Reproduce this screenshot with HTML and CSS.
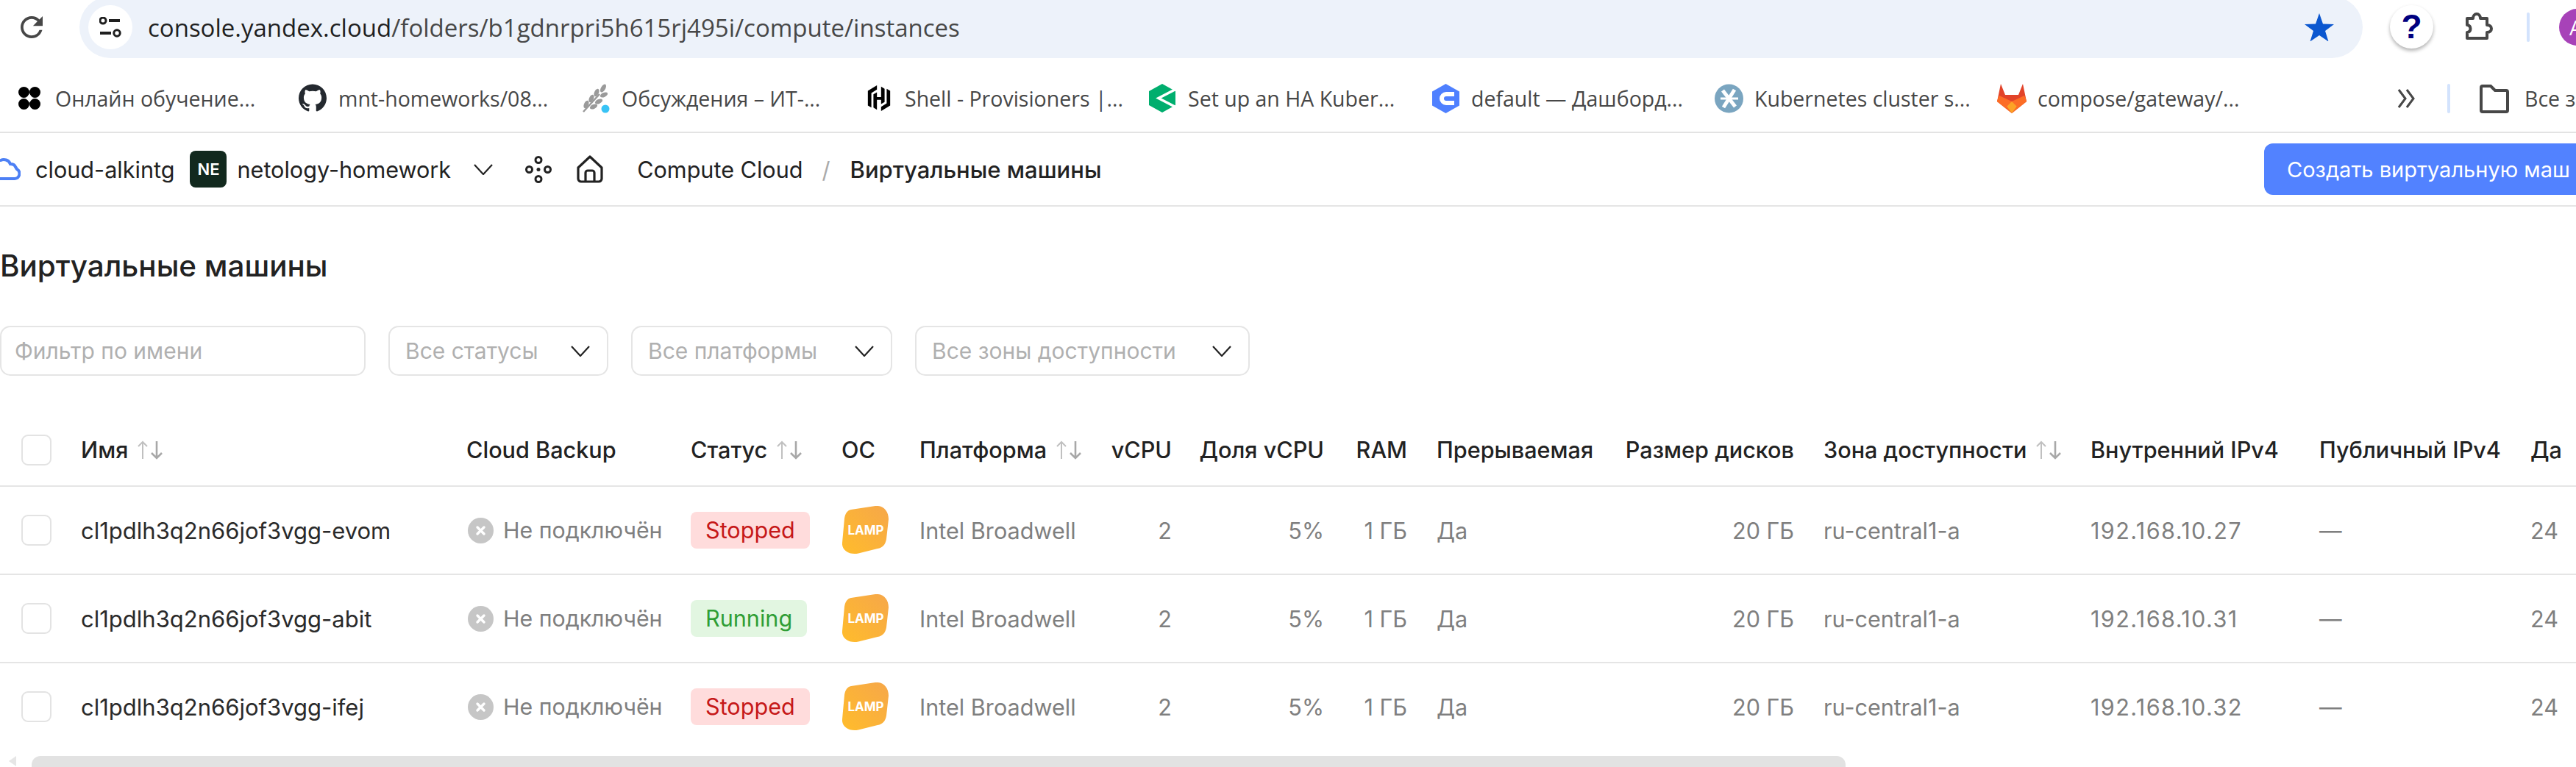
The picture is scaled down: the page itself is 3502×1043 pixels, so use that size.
FILE: index.html
```html
<!DOCTYPE html>
<html lang="ru">
<head>
<meta charset="utf-8">
<title>Виртуальные машины</title>
<link rel="stylesheet" href="styles.css">
</head>
<body>
<svg class="sprite" aria-hidden="true">
  <symbol id="sort" viewBox="0 0 36 26"><path d="M8 25V2M2 8l6-6 6 6" fill="none" stroke="#c0c0c0" stroke-width="2"/><path d="M27 1v23M20 17l7 7 7-7" fill="none" stroke="#a8a8a8" stroke-width="2.6"/></symbol>
  <symbol id="chev" viewBox="0 0 26 15"><path d="M1 1l12 13L25 1" fill="none" stroke="#222" stroke-width="2.2"/></symbol>
  <symbol id="off" viewBox="0 0 35 35"><circle cx="17.5" cy="17.5" r="17.5" fill="#c6c6c6"/><path d="M13 13l9 9M22 13l-9 9" stroke="#fff" stroke-width="3.4" stroke-linecap="round"/></symbol>
  <linearGradient id="lampfill" x1="0" y1="1" x2="1" y2="0"><stop offset="0" stop-color="#ffbc2b"/><stop offset="1" stop-color="#f6a74a"/></linearGradient>
  <symbol id="lamp" viewBox="0 0 64 66"><path d="M12 5L45 0C56-1 63 7 63 18L60 45C59 52 55 57 48 58L22 64.500C9 67-1 60 0 50L3 17C4 10 7 6 12 5Z" fill="url(#lampfill)"/></symbol>
</svg>

<header class="browser">
  <div class="toolbar">
    <svg class="reload" viewBox="4 4 16 16"><path fill="#474747" d="M17.650 6.350A7.958 7.958 0 0012 4c-4.420 0-7.990 3.580-7.990 8s3.570 8 7.990 8c3.730 0 6.840-2.550 7.730-6h-2.080A5.990 5.990 0 0112 18c-3.310 0-6-2.690-6-6s2.690-6 6-6c1.660 0 3.140.690 4.220 1.780L13 11h7V4l-2.350 2.350z"/></svg>
    <div class="omnibox">
      <span class="tune"><svg viewBox="0 0 30 28"><circle cx="5" cy="5" r="4" fill="none" stroke="#1f1f1f" stroke-width="3"/><path d="M13 5h15M1 22h15" stroke="#1f1f1f" stroke-width="4"/><circle cx="24" cy="22" r="4.200" fill="none" stroke="#1f1f1f" stroke-width="3"/></svg></span>
      <span class="url"><span class="host">console.yandex.cloud</span>/folders/b1gdnrpri5h615rj495i/compute/instances</span>
      <svg class="star" viewBox="0 0 40 38"><path fill="#0b57d0" d="M20 0l5 14.500 15 .5-12 9 4.500 14.500L20 30 7.500 38.500 12 24 0 15l15-.5z"/></svg>
    </div>
    <span class="help">?</span>
    <svg class="puzzle" viewBox="0 0 42 40"><path d="M3 10h8c0-8 10-8 10 0h9v9c8 0 8 10 0 10v8H3v-8c6-1 6-9 0-10z" fill="none" stroke="#474747" stroke-width="4" stroke-linejoin="round"/></svg>
    <span class="tool-sep"></span>
    <span class="avatar">А</span>
  </div>
  <nav class="bookmarks">
    <a class="bm"><span class="fav"><svg viewBox="0 0 30 31" width="30" height="31"><circle cx="7.500" cy="7.500" r="7.500"/><circle cx="22.500" cy="7.500" r="7.500"/><circle cx="7.500" cy="23.500" r="7.500"/><circle cx="22.500" cy="23.500" r="7.500"/><path d="M12 12h6v7h-6z"/><path fill="#fff" d="M15 10l5 5.500-5 5.500-5-5.500z"/></svg></span>Онлайн обучение...</a>
    <a class="bm"><span class="fav"><svg viewBox="0 0 16 16" width="38" height="39"><path fill="#24292f" d="M8 0C3.580 0 0 3.580 0 8c0 3.540 2.290 6.530 5.470 7.590.4.070.55-.17.55-.38 0-.19-.01-.82-.01-1.490-2.010.37-2.530-.49-2.690-.94-.09-.23-.48-.94-.82-1.130-.28-.15-.68-.52-.01-.53.63-.01 1.080.58 1.230.82.72 1.210 1.870.87 2.330.66.07-.52.28-.87.51-1.070-1.780-.2-3.640-.89-3.640-3.950 0-.87.31-1.590.82-2.150-.08-.2-.36-1.020.08-2.120 0 0 .67-.21 2.200.82.64-.18 1.320-.27 2-.27.68 0 1.360.09 2 .27 1.530-1.040 2.200-.82 2.200-.82.44 1.100.16 1.920.08 2.120.51.56.82 1.270.82 2.150 0 3.070-1.870 3.750-3.650 3.950.29.25.54.73.54 1.480 0 1.070-.01 1.930-.01 2.200 0 .21.15.46.55.38A8.013 8.013 0 0016 8c0-4.420-3.580-8-8-8z"/></svg></span>mnt-homeworks/08...</a>
    <a class="bm"><span class="fav"><svg viewBox="0 0 39 40" width="39" height="40"><path d="M2 38L24 14" stroke="#9a9a9a" stroke-width="2.500"/><g fill="#9a9a9a"><ellipse cx="6" cy="28" rx="3" ry="5.500" transform="rotate(25 6 28)"/><ellipse cx="13" cy="20" rx="3" ry="5.500" transform="rotate(25 13 20)"/><ellipse cx="20" cy="12" rx="3" ry="5.500" transform="rotate(25 20 12)"/><ellipse cx="29" cy="6" rx="3" ry="6" transform="rotate(30 29 6)"/><ellipse cx="16" cy="31" rx="5.500" ry="3" transform="rotate(-25 16 31)"/><ellipse cx="23" cy="24" rx="5.500" ry="3" transform="rotate(-25 23 24)"/><ellipse cx="30" cy="15" rx="5.500" ry="3" transform="rotate(-25 30 15)"/></g><circle cx="32" cy="34" r="5.500" fill="#38c3f5"/></svg></span>Обсуждения – ИТ-...</a>
    <a class="bm"><span class="fav"><svg viewBox="0 0 38 39" width="36" height="39"><path d="M16 1L3 9v21l5 3V12l8-5zM22 38l13-8V9l-5-3v21l-8 5z"/><path d="M16 11l-5 3v19l5 3V22h6v6l5-3V6l-5-3v15h-6z"/></svg></span>Shell - Provisioners |...</a>
    <a class="bm"><span class="fav"><svg viewBox="0 0 36 39" width="36" height="39"><path fill="#00ae6e" d="M18 0L0 10v19l18 10 18-10V10z"/><path fill="none" stroke="#fff" stroke-width="3.500" d="M37 7L13 19.500 37 32"/><path fill="#fff" d="M18-1h2L18 0zM24 0h13v6z"/></svg></span>Set up an HA Kuber...</a>
    <a class="bm"><span class="fav"><svg viewBox="0 0 37 40" width="37" height="40"><path fill="#4f80ff" d="M18.500 0L37 10.500v19L18.500 40 0 29.500v-19z"/><path fill="none" stroke="#fff" stroke-width="6" d="M30 14h-11a6 6 0 0 0 0 12h11"/></svg></span>default — Дашборд...</a>
    <a class="bm"><span class="fav"><svg viewBox="0 0 39 40" width="39" height="40"><circle cx="19.500" cy="20" r="19.500" fill="#7aa5c0"/><path d="M11 9l17 22M27 8L12 32" stroke="#fff" stroke-width="5"/><path d="M8 20h24" stroke="#fff" stroke-width="3"/></svg></span>Kubernetes cluster s...</a>
    <a class="bm"><span class="fav"><svg viewBox="0 0 40 40" width="40" height="40"><path fill="#e24329" d="M5 0l6 15h18l6-15 5 24-20 16L0 24z"/><path fill="#fc6d26" d="M0 24l2-7 18 23zM40 24l-2-7-18 23z"/><path fill="#fca326" d="M8 24h24l-12 16z"/><path fill="#fc6d26" d="M0 24l3-8 17 8-8 8zM40 24l-3-8-17 8 8 8z"/></svg></span>compose/gateway/...</a>
    <svg class="more" viewBox="0 0 24 30"><path d="M2 3l9 12-9 12M13 3l9 12-9 12" fill="none" stroke="#474747" stroke-width="3"/></svg>
    <span class="bm-sep"></span>
    <svg class="folder" viewBox="0 0 40 40"><path d="M2 5a2 2 0 0 1 2-2h11l6 6h15a2 2 0 0 1 2 2v25a2 2 0 0 1-2 2H4a2 2 0 0 1-2-2z" fill="none" stroke="#474747" stroke-width="4"/></svg>
    <span class="all-bm">Все з</span>
  </nav>
</header>

<div class="app-bar">
  <svg class="cloud" viewBox="0 0 40 30"><path d="M8 28h24a7 7 0 0 0 3-13c-1-1-1-2-2-3C32 9 29 8 26 8 24 2 17 1 13 3" fill="none" stroke="#4d80f5" stroke-width="4" stroke-linecap="round"/></svg>
  <span class="crumb-cloud">cloud-alkintg</span>
  <span class="ne">NE</span>
  <span class="crumb-folder">netology-homework</span>
  <svg class="folder-chev"><use href="#chev"/></svg>
  <svg class="nodes" viewBox="0 0 36 37"><g fill="none" stroke="#222" stroke-width="3"><circle cx="18" cy="5.500" r="4"/><circle cx="5.500" cy="18.500" r="4"/><circle cx="30.500" cy="18.500" r="4"/><circle cx="18" cy="31.500" r="4"/></g><circle cx="18" cy="18.500" r="2.500" fill="#222"/></svg>
  <svg class="home" viewBox="0 0 36 38"><path d="M2 17L18 2l16 15v15a4 4 0 0 1-4 4H6a4 4 0 0 1-4-4z" fill="none" stroke="#222" stroke-width="3.200" stroke-linejoin="round"/><path d="M12 36V24a3 3 0 0 1 3-3h6a3 3 0 0 1 3 3v12" fill="none" stroke="#222" stroke-width="3.200"/></svg>
  <span class="crumb">Compute Cloud</span>
  <span class="crumb-slash">/</span>
  <span class="crumb-current">Виртуальные машины</span>
  <button class="create">Создать виртуальную маш</button>
</div>

<main>
  <h1 class="title">Виртуальные машины</h1>
  <div class="filters">
    <div class="field field-name">Фильтр по имени</div>
    <div class="field field-status">Все статусы<svg class="chev"><use href="#chev"/></svg></div>
    <div class="field field-platform">Все платформы<svg class="chev"><use href="#chev"/></svg></div>
    <div class="field field-zone">Все зоны доступности<svg class="chev"><use href="#chev"/></svg></div>
  </div>

  <div class="table">
    <div class="row head">
      <div class="cell"><span class="check"></span></div>
      <div class="cell">Имя<svg class="sort"><use href="#sort"/></svg></div>
      <div class="cell">Cloud Backup</div>
      <div class="cell">Статус<svg class="sort"><use href="#sort"/></svg></div>
      <div class="cell">ОС</div>
      <div class="cell">Платформа<svg class="sort"><use href="#sort"/></svg></div>
      <div class="cell num">vCPU</div>
      <div class="cell num">Доля vCPU</div>
      <div class="cell num">RAM</div>
      <div class="cell">Прерываемая</div>
      <div class="cell num">Размер дисков</div>
      <div class="cell">Зона доступности<svg class="sort"><use href="#sort"/></svg></div>
      <div class="cell">Внутренний IPv4</div>
      <div class="cell">Публичный IPv4</div>
      <div class="cell">Да</div>
    </div>

    <div class="row">
      <div class="cell"><span class="check"></span></div>
      <div class="cell name">cl1pdlh3q2n66jof3vgg-evom</div>
      <div class="cell backup"><svg class="off"><use href="#off"/></svg>Не подключён</div>
      <div class="cell"><span class="badge stopped">Stopped</span></div>
      <div class="cell os"><span class="lamp"><svg><use href="#lamp"/></svg><span class="lamp-text">LAMP</span></span></div>
      <div class="cell">Intel Broadwell</div>
      <div class="cell num">2</div>
      <div class="cell num">5%</div>
      <div class="cell num">1 ГБ</div>
      <div class="cell">Да</div>
      <div class="cell num">20 ГБ</div>
      <div class="cell">ru-central1-a</div>
      <div class="cell ip">192.168.10.27</div>
      <div class="cell">—</div>
      <div class="cell">24</div>
    </div>

    <div class="row">
      <div class="cell"><span class="check"></span></div>
      <div class="cell name">cl1pdlh3q2n66jof3vgg-abit</div>
      <div class="cell backup"><svg class="off"><use href="#off"/></svg>Не подключён</div>
      <div class="cell"><span class="badge running">Running</span></div>
      <div class="cell os"><span class="lamp"><svg><use href="#lamp"/></svg><span class="lamp-text">LAMP</span></span></div>
      <div class="cell">Intel Broadwell</div>
      <div class="cell num">2</div>
      <div class="cell num">5%</div>
      <div class="cell num">1 ГБ</div>
      <div class="cell">Да</div>
      <div class="cell num">20 ГБ</div>
      <div class="cell">ru-central1-a</div>
      <div class="cell ip">192.168.10.31</div>
      <div class="cell">—</div>
      <div class="cell">24</div>
    </div>

    <div class="row last">
      <div class="cell"><span class="check"></span></div>
      <div class="cell name">cl1pdlh3q2n66jof3vgg-ifej</div>
      <div class="cell backup"><svg class="off"><use href="#off"/></svg>Не подключён</div>
      <div class="cell"><span class="badge stopped">Stopped</span></div>
      <div class="cell os"><span class="lamp"><svg><use href="#lamp"/></svg><span class="lamp-text">LAMP</span></span></div>
      <div class="cell">Intel Broadwell</div>
      <div class="cell num">2</div>
      <div class="cell num">5%</div>
      <div class="cell num">1 ГБ</div>
      <div class="cell">Да</div>
      <div class="cell num">20 ГБ</div>
      <div class="cell">ru-central1-a</div>
      <div class="cell ip">192.168.10.32</div>
      <div class="cell">—</div>
      <div class="cell">24</div>
    </div>
  </div>

  <div class="scrollbar"><span class="scroll-arrow"></span><span class="scroll-thumb"></span></div>
</main>
</body>
</html>
```

FILE: styles.css
```css
* { box-sizing: border-box; }
html, body { margin: 0; padding: 0; }
body {
  width: 3502px;
  height: 1043px;
  overflow: hidden;
  background: #fff;
  color: #222;
  font-family: "Inter", "Noto Sans", sans-serif;
  font-size: 30.6px;
}
.sprite { width: 0; height: 0; position: absolute; }

/* browser chrome */
.browser { font-family: "Open Sans", "Noto Sans", sans-serif; }
.toolbar { height: 90px; display: flex; align-items: flex-start; overflow: hidden; }
.reload { width: 30px; height: 30px; margin: 22px 0 0 28px; flex: none; }
.omnibox {
  margin: -5px 0 0 50px;
  width: 3104px;
  height: 84px;
  border-radius: 42px;
  background: #edf2fa;
  display: flex;
  align-items: center;
  padding-left: 12px;
  flex: none;
}
.tune { width: 60px; height: 60px; border-radius: 50%; background: #fff; display: flex; align-items: center; justify-content: center; flex: none; margin-top: 0; }
.tune svg { width: 30px; height: 28px; }
.url { margin-left: 21px; font-size: 33px; color: #474747; white-space: nowrap; }
.host { color: #1f1f1f; }
.star { width: 40px; height: 38px; margin-left: auto; margin-right: 39px; flex: none; }
.help {
  width: 59px; height: 59px; margin: 7px 0 0 37px; border-radius: 50%; background: #fff;
  box-shadow: 0 3px 5px rgba(0,0,0,.3);
  color: #00007f; font: 700 46px/59px "Liberation Sans", sans-serif; text-align: center; flex: none;
}
.puzzle { width: 42px; height: 40px; margin: 15px 0 0 43px; flex: none; }
.tool-sep { width: 4px; height: 40px; margin: 17px 0 0 42px; background: #d3e3fd; border-radius: 2px; flex: none; }
.avatar { width: 50px; height: 50px; margin: 12px 0 0 40px; border-radius: 50%; background: #a742b8; color: #fff; font-size: 28px; line-height: 50px; padding-left: 14px; flex: none; }

.bookmarks { height: 91px; display: flex; align-items: center; padding: 0 0 2px 21px; border-bottom: 2px solid #e3e3e3; font-size: 28.5px; color: #474747; white-space: nowrap; overflow: hidden; }
.bm { width: 385px; display: flex; align-items: center; flex: none; }
.fav { width: 38px; margin-right: 16px; display: flex; justify-content: center; flex: none; }
.fav svg { display: block; flex: none; }
.more { width: 24px; height: 30px; margin-left: 158px; flex: none; }
.bm-sep { width: 4px; height: 40px; margin-left: 44px; background: #d3e3fd; border-radius: 2px; flex: none; }
.folder { width: 40px; height: 40px; margin-left: 40px; flex: none; }
.all-bm { margin-left: 21px; }

/* app bar */
.app-bar { height: 100px; display: flex; align-items: center; border-bottom: 2px solid #e5e5e5; font-size: 30.6px; white-space: nowrap; overflow: hidden; padding-bottom: 0; }
.cloud { width: 40px; height: 30px; margin-left: -12px; flex: none; }
.crumb-cloud { margin-left: 20px; }
.ne { width: 50px; height: 50px; margin-left: 21px; border-radius: 8px; background: #12291e; color: #fff; font-size: 22px; font-weight: 600; line-height: 50px; text-align: center; flex: none; }
.crumb-folder { margin-left: 14px; }
.folder-chev { width: 26px; height: 15px; margin-left: 31px; flex: none; }
.nodes { width: 36px; height: 37px; margin-left: 44px; flex: none; }
.home { width: 36px; height: 38px; margin-left: 34px; flex: none; }
.crumb { margin-left: 46px; }
.crumb-slash { margin-left: 26px; color: #aaa; }
.crumb-current { margin-left: 27px; font-size: 31px; font-weight: 500; }
.create { margin-left: auto; width: 424px; height: 70px; padding: 0 0 0 31px; border: 0; border-radius: 12px 0 0 12px; background: #5282ff; color: #fff; font: inherit; font-size: 29px; text-align: left; white-space: nowrap; overflow: hidden; flex: none; }

/* page */
.title { margin: 56px 0 56px; font-size: 40.4px; line-height: 50px; font-weight: 500; }
.filters { display: flex; gap: 31px; height: 68px; color: #b0b0b0; font-size: 30px; }
.field { display: flex; align-items: center; height: 68px; border: 2px solid #e5e5e5; border-radius: 14px; padding: 0 23px 0 21px; white-space: nowrap; flex: none; }
.field-name { width: 497px; padding-left: 18px; }
.field-status { width: 299px; }
.field-platform { width: 355px; }
.field-zone { width: 455px; }
.chev { width: 26px; height: 15px; margin-left: auto; flex: none; }

/* table */
.table { margin-top: 52px; }
.row {
  display: grid;
  grid-template-columns: 90px 524px 305px 205px 106px 262px 121px 207px 113px 256px 270px 363px 311px 287px 82px;
  align-items: center;
  height: 120px;
  border-bottom: 2px solid #e5e5e5;
  color: #7f7f7f;
  white-space: nowrap;
}
.row.head { height: 99px; color: #222; font-weight: 500; }
.row.last { height: 118px; border-bottom: 0; }
.cell { padding: 0 20px; display: flex; align-items: center; min-width: 0; }
.cell:first-child { padding: 0 0 0 29px; }
.num { justify-content: flex-end; padding-right: 20px; }
.name { color: #2a2a2a; font-size: 31px; }
.ip { letter-spacing: 1.4px; }
.check { display: block; width: 41px; height: 42px; border: 2px solid #e3e3e3; border-radius: 9px; }
.sort { width: 36px; height: 26px; margin-left: 12px; flex: none; }
.backup { padding-left: 22px; font-size: 30.3px; }
.off { width: 35px; height: 35px; margin-right: 13px; flex: none; }
.badge { height: 50px; line-height: 50px; padding: 0 20px; border-radius: 8px; }
.stopped { background: #ffdcdc; color: #c61818; }
.running { background: #e2f6e1; color: #2f9e35; }
.os { padding-left: 21px; }
.lamp { position: relative; display: block; width: 64px; height: 66px; }
.lamp svg { display: block; width: 64px; height: 66px; }
.lamp-text { position: absolute; inset: 0; display: flex; align-items: center; justify-content: center; color: #fff; font-size: 17px; font-weight: 700; }

.scrollbar { margin-top: 8px; height: 15px; display: flex; }
.scroll-arrow { width: 0; height: 0; margin: 0 21px 0 12px; border-style: solid; border-width: 7px 10px 7px 0; border-color: transparent #e6e6e6 transparent transparent; flex: none; }
.scroll-thumb { width: 2466px; height: 15px; background: #e2e2e2; border-radius: 12px 12px 0 0; flex: none; }
```
